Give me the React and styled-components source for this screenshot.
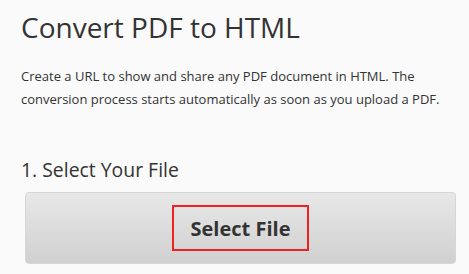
import React from 'react'
import styled, { createGlobalStyle } from 'styled-components'

const GlobalStyle = createGlobalStyle`
    body {
        margin: 0;
        background: #fafafa;
        font-family: "Open Sans", "Liberation Sans", sans-serif;
        color: #333;
    }
`

const Page = styled.div`
    padding: 7px 13px 0 21px;
`

const Title = styled.h1`
    margin: 0;
    font-size: 28px;
    font-weight: 400;
    line-height: 40px;
    color: #333;
`

const Intro = styled.p`
    margin: 18px 0 0;
    font-size: 13px;
    line-height: 23px;
    color: #333;
`

const Step = styled.h2`
    margin: 45px 0 0;
    font-size: 19.4px;
    font-weight: 400;
    line-height: 28px;
    color: #333;
`

const Picker = styled.div`
    margin: 8px 0 0 4px;
    height: 72px;
    box-sizing: border-box;
    border: 1px solid #d6d6d6;
    border-radius: 4px;
    background: linear-gradient(#e8e8e8, #d0d0d0);
    display: flex;
    align-items: center;
    justify-content: center;
`

const SelectButton = styled.button`
    width: 137px;
    height: 46px;
    border: 2px solid #ee2222;
    background: transparent;
    font-family: inherit;
    font-size: 20px;
    font-weight: 700;
    color: #333;
    cursor: pointer;
`

const App = () => {
    return (
        <>
            <GlobalStyle />
            <Page>
                <Title>Convert PDF to HTML</Title>
                <Intro>
                    Create a URL to show and share any PDF document in HTML. The
                    conversion process starts automatically as soon as you upload a PDF.
                </Intro>
                <Step>1. Select Your File</Step>
                <Picker>
                    <SelectButton>Select File</SelectButton>
                </Picker>
            </Page>
        </>
    )
}

export default App
